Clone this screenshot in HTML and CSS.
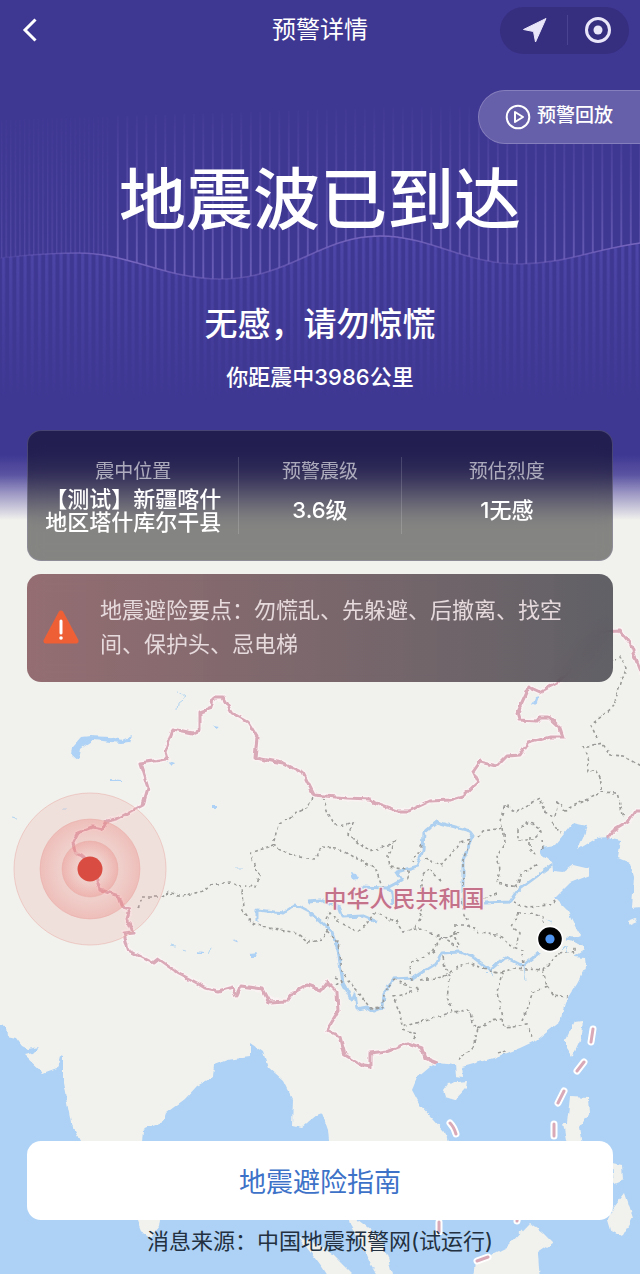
FILE: index.html
```
<!DOCTYPE html>
<html lang="zh-CN">
<head>
<meta charset="UTF-8">
<meta name="viewport" content="width=device-width, initial-scale=1">
<title>预警详情</title>
<link rel="stylesheet" href="styles.css">
</head>
<body>
<div class="page">

<!-- 地图底图 -->
<svg class="map" viewBox="0 0 640 1274" preserveAspectRatio="xMidYMax slice" role="img" aria-label="震中地图">
  <defs>
    <filter id="rough" filterUnits="userSpaceOnUse" x="-10" y="600" width="660" height="690">
      <feTurbulence type="fractalNoise" baseFrequency="0.13" numOctaves="2" seed="4"/>
      <feDisplacementMap in="SourceGraphic" scale="5" xChannelSelector="R" yChannelSelector="G"/>
    </filter>
    <radialGradient id="ring">
      <stop offset=".3" stop-color="#ef8f88" stop-opacity=".08"/>
      <stop offset="1" stop-color="#ea7b76" stop-opacity=".34"/>
    </radialGradient>
    <path id="border" d="M75 852L73 843L78 833L93 827L103 829L107 821L117 819L143 805L148 788L140 763L167 759L165 752L173 729L193 733L200 730L200 712L211 708L213 698L223 698L232 713L248 722L257 737L255 758L283 763L303 773L314 795L347 798L370 799L375 803L398 811L409 811L430 801L450 800L463 796L478 782L473 772L480 762L497 766L507 756L520 755L528 743L550 737L563 737L560 728L548 717L540 717L537 721L519 720L517 713L529 687L540 692L557 683L580 660L600 632L620 631L630 643L642 674M78 854L85 857L97 880L100 890L119 896L123 907L130 909L127 918L133 932L124 933L128 950L153 963L158 959L178 973L197 983L205 988L218 991L233 987L236 997L241 986L262 989L269 1002L287 1001L293 993L307 985L321 990L327 982L337 992L338 1012L327 1030L340 1037L345 1055L363 1066L370 1067L370 1053L387 1051L408 1043L422 1048L425 1058L437 1063M608 837L613 831L628 822L635 811L642 811"/>
    <path id="dashes" d="M593 1029L591 1042M584 1062L577 1071M564 1091L558 1103M554 1124V1136M450 1123Q454 1127 456 1134M439 1222V1232M477 1261L488 1257M518 1214L517 1221"/>
  </defs>
  <rect y="-400" width="640" height="1700" fill="#f1f1ed"/>

  <g filter="url(#rough)">
    <path class="sea" d="M-20 1025L6 1027L7 1036L16 1038L22 1046L28 1049L39 1047L33 1053L24 1055L43 1073L57 1068L60 1056L63 1057L63 1083L71 1123L80 1141L115 1190L138 1220L143 1233L150 1238L159 1227L160 1220L145 1180L142 1141L143 1130L163 1122L166 1113L185 1099L197 1086L213 1077L214 1065L227 1060L250 1057L250 1043L263 1052L268 1067L283 1080L293 1100L292 1125L302 1127L317 1115L322 1113L328 1130L329 1141L340 1185L440 1180L448 1141L445 1132L420 1105L412 1090L417 1078L430 1067L437 1063L455 1065L456 1076L463 1077L462 1067L497 1057L520 1048L537 1040L560 1022L565 1003L577 984L586 967L585 958L573 957L584 950L582 943L572 938L580 935L577 930L567 910L555 898L570 883L590 875L590 869L573 865L563 872L553 871L552 862L540 853L542 847L555 845L573 823L587 826L583 838L577 850L597 838L607 837L621 840L618 858L630 863L634 877L632 908L660 905V1300H-20Z"/>
    <path class="land" d="M345 1200L350 1225L363 1247L370 1263L383 1284H394L388 1257L380 1237L358 1220L350 1195ZM298 1236L320 1265L332 1284H362L333 1255L320 1245ZM443 1090L448 1083L467 1081L466 1088L455 1100L445 1097ZM575 1022L583 1021L580 1040L572 1057L566 1048L566 1040ZM570 1097L588 1098L589 1113L580 1127L583 1145H567L563 1123L567 1123ZM612 1163L622 1165L623 1180L614 1184ZM607 1220L612 1210L625 1193L633 1217L622 1237L610 1230ZM472 1284L475 1263L507 1247L530 1223L542 1232L553 1243L538 1253L540 1284ZM628 922L636 919L637 922L630 925Z"/>
    <path class="sea" d="M82 737L90 736L110 737L123 740L132 736L130 742L121 743L93 740L85 745L80 749L78 760L72 755L73 747ZM350 873L356 874L359 879L352 880ZM532 705L535 697L539 696L537 702ZM250 954L258 953L255 957L250 957ZM232 941L239 940L238 943ZM212 726L220 727L216 729ZM168 762L174 764L172 766ZM211 806L218 806V808H211ZM110 779L121 780V781H110ZM197 952L203 953V954H197Z"/>
    <path class="stream" d="M177 691L185 697L178 702L177 710M171 945L176 946M182 949L186 950M209 953L212 947M236 868H242M62 809H67M11 818L17 819M486 974L490 970L494 976M524 967L526 980M546 920L552 923M562 950L566 946L568 952"/>
    <path class="river" d="M257 922V910L283 913L295 905L310 913L332 932L338 950L343 983L352 1000L355 993L357 1009L367 1007L373 1011L383 1007L384 993L393 979L413 978L437 963L442 953L460 952L473 957L490 970L505 957L523 966L540 952M565 938L573 939L582 944M308 901L320 900L340 908L343 917L363 916L377 922M360 887L387 888L402 880L397 872L417 866L423 850L424 833L437 822L470 831L473 835L463 860V905M387 888L392 892L393 905M485 903L510 902L518 890L552 865"/>
    <path class="province" d="M312 797L308 808L298 812L278 825L273 845L250 853L255 867L260 875L256 887L245 886M273 845L293 856L315 859L320 847L338 848L353 857L375 867L382 887M323 797L328 813L335 825L353 823L348 835L370 852L395 842L388 857L390 867L408 870V882M138 908L143 897L160 897L167 892L183 896L203 891L210 885L230 882L242 888L243 910L252 923L263 927L298 933L308 942L323 940L327 932L338 943L342 970L347 980L357 990L370 1008L383 1007L384 993L393 980M327 932V920L330 913L340 923L358 932L367 923L377 912L397 923L403 932L420 928L440 937L458 948M422 845L413 862M428 868L422 877V913L415 928M425 858L440 866L460 843L470 840L463 860V912L470 927L480 933L497 935L513 947L522 950L523 967M430 870L443 882M478 837L483 831L503 828L500 820L505 805L517 812L540 798L547 815L555 817L558 802L565 810L602 792L617 793L624 818M552 823L561 832M503 828L505 842L497 857L500 870L497 883L517 887M497 893L483 898M528 822L518 828V840L533 840L540 833L538 827ZM530 837V850L535 855M542 840L543 850M515 887L523 873L540 863M602 790L600 777L595 770L588 773L587 753L583 747L603 743L610 755L623 756L642 767M597 738L591 725L613 707L622 680L627 667L620 657L615 660M513 903L527 907L550 905L555 900M518 913L512 927L520 933L517 945M518 913L530 913L543 917V923M455 925H470M455 925V938L460 947M458 932L440 940L432 953M443 957L445 967L450 980L447 997L453 1012L470 1010L472 1023L478 1028L473 1047L458 1060M450 972L467 963L490 970L502 973L497 993L502 1013L505 1028L527 1025L532 1037M478 1028L492 1020L502 1018M502 973L513 968L543 970L547 987L533 992L522 1020M547 987L553 995L568 997M543 970L558 953L567 952L575 953V947M393 980L420 990L393 997L400 1013L402 1027L433 1018L453 1012M402 1030L417 1035L410 1043M412 980L410 963L437 950M420 980L443 977L450 972M335 978L342 981L336 985M497 1053L505 1051V1055"/>
    <use href="#border" class="halo"/>
    <use href="#border" class="nation"/>
  </g>
  <use href="#dashes" class="dash-halo"/>
  <use href="#dashes" class="nation"/>

  <text class="country" x="404" y="907" text-anchor="middle">中华人民共和国</text>

  <g stroke="#e7a9a4" stroke-opacity=".5">
    <circle cx="90" cy="869" r="76" fill="#ef9791" fill-opacity=".18"/>
    <circle cx="90" cy="869" r="50" fill="url(#ring)"/>
    <circle cx="90" cy="869" r="28" fill="url(#ring)"/>
  </g>
  <circle cx="90" cy="869" r="12.5" fill="#d94c42"/>

  <circle cx="550" cy="939" r="13.5" fill="#fff"/>
  <circle cx="550" cy="939" r="11.8" fill="#000"/>
  <circle cx="550" cy="939" r="4.6" fill="#4f94ee"/>
</svg>

<div class="shade">
  <svg class="wave" viewBox="0 0 640 300" preserveAspectRatio="none" aria-hidden="true">
    <defs>
      <pattern id="bars" width="9.5" height="300" patternUnits="userSpaceOnUse"><rect x="3" width="1.6" height="300" fill="#8b7cd4"/></pattern>
      <pattern id="fineBars" width="4.6" height="300" patternUnits="userSpaceOnUse"><rect x="1" width="1.2" height="300" fill="#6358b4"/></pattern>
      <pattern id="softBars" width="7.2" height="300" patternUnits="userSpaceOnUse"><rect x="2" width="3" height="300" fill="#5d54bd"/></pattern>
      <linearGradient id="up" x2="0" y2="1"><stop offset="0" stop-color="#fff" stop-opacity="0"/><stop offset="1" stop-color="#fff" stop-opacity=".65"/></linearGradient>
      <linearGradient id="down" x2="0" y2="1"><stop offset="0" stop-color="#fff" stop-opacity=".55"/><stop offset="1" stop-color="#fff" stop-opacity="0"/></linearGradient>
      <linearGradient id="lineFade"><stop offset="0" stop-color="#7b6cc8" stop-opacity=".1"/><stop offset=".2" stop-color="#7766bf"/><stop offset=".35" stop-color="#7766bf" stop-opacity=".4"/><stop offset=".6" stop-color="#7766bf"/><stop offset=".8" stop-color="#7766bf" stop-opacity=".3"/><stop offset="1" stop-color="#7766bf"/></linearGradient>
      <mask id="above"><path fill="url(#up)" d="M0 20L640 0V143C590 150 565 164 518 164C465 164 430 136 380 136C320 136 290 179 220 179C165 179 130 153 78 153C45 153 30 155 0 158Z"/></mask>
      <mask id="below"><path fill="url(#down)" d="M0 300V158C30 155 45 153 78 153C130 153 165 179 220 179C290 179 320 136 380 136C430 136 465 164 518 164C565 164 590 150 640 143V300Z"/></mask>
    </defs>
    <g mask="url(#above)">
      <rect x="110" width="530" height="300" fill="url(#bars)"/>
      <rect width="110" height="300" fill="url(#fineBars)"/>
    </g>
    <rect width="640" height="300" fill="url(#softBars)" mask="url(#below)"/>
    <path d="M0 158C30 155 45 153 78 153C130 153 165 179 220 179C290 179 320 136 380 136C430 136 465 164 518 164C565 164 590 150 640 143" fill="none" stroke="url(#lineFade)" stroke-width="1.5"/>
  </svg>
</div>

<header class="nav">
  <button class="back" type="button" aria-label="返回">
    <svg width="16" height="26" viewBox="0 0 16 26"><path d="M13.500 2.500L3 13L13.500 23.500" fill="none" stroke="#fff" stroke-width="3"/></svg>
  </button>
  <h1 class="nav-title">预警详情</h1>
  <div class="capsule">
    <button type="button" aria-label="定位">
      <svg width="26" height="26" viewBox="0 0 26 26"><path d="M24 1.500L13.500 25L11.500 14.500L1.500 12.500Z" fill="#e9e6fa" stroke="#e9e6fa" stroke-linejoin="round"/></svg>
    </button>
    <button type="button" aria-label="关闭">
      <svg width="28" height="28" viewBox="0 0 28 28"><circle cx="14" cy="14" r="11.500" fill="none" stroke="#e9e6fa" stroke-width="3"/><circle cx="14" cy="14" r="4.500" fill="#e9e6fa"/></svg>
    </button>
  </div>
</header>

<main class="content">
  <button class="replay" type="button">
    <svg width="26" height="26" viewBox="0 0 26 26" fill="none" stroke="#fff" stroke-width="2" stroke-linejoin="round"><circle cx="13" cy="13" r="11.300"/><path d="M10 8L18 13L10 18Z"/></svg>
    <span>预警回放</span>
  </button>

  <h2 class="status">地震波已到达</h2>
  <p class="feel">无感，请勿惊慌</p>
  <p class="distance">你距震中3986公里</p>

  <dl class="facts card">
    <div class="fact"><dt>震中位置</dt><dd>【测试】新疆喀什<br>地区塔什库尔干县</dd></div>
    <div class="fact"><dt>预警震级</dt><dd>3.6级</dd></div>
    <div class="fact"><dt>预估烈度</dt><dd>1无感</dd></div>
  </dl>

  <section class="tips card">
    <svg width="38" height="36" viewBox="0 0 38 36" aria-hidden="true"><path d="M19 4L34 32H4Z" fill="#ee5f36" stroke="#ee5f36" stroke-width="5" stroke-linejoin="round"/><path d="M19 12V24" stroke="#fff" stroke-width="3" stroke-linecap="round"/><circle cx="19" cy="29" r="1.800" fill="#fff"/></svg>
    <p>地震避险要点：勿慌乱、先躲避、后撤离、找空间、保护头、忌电梯</p>
  </section>
</main>

<footer class="bottom">
  <button class="guide" type="button">地震避险指南</button>
  <p class="source">消息来源：中国地震预警网(试运行)</p>
</footer>

</div>
</body>
</html>
```
FILE: styles.css
```
:root{
  --purple:#3f3893;
  --land:#f1f1ed;
  --sea:#aed2f5;
  --pink:#d9a9b8;
}
*{box-sizing:border-box;margin:0;padding:0;}
body{font-family:Inter,"Noto Sans CJK SC",sans-serif;background:var(--land);color:#fff;}
button{border:none;background:none;font:inherit;color:inherit;cursor:pointer;}
.page{position:relative;min-height:100vh;display:flex;flex-direction:column;overflow:hidden;}

/* 地图 */
.map{position:absolute;inset:0;width:100%;height:100%;}
.sea{fill:var(--sea);}
.land{fill:var(--land);}
.river{fill:none;stroke:#add0f0;stroke-width:3;stroke-linejoin:round;}
.stream{fill:none;stroke:#b5d6f0;stroke-width:1;}
.province{fill:none;stroke:#9a9a98;stroke-width:1.6;stroke-dasharray:3 3;}
.nation{fill:none;stroke:var(--pink);stroke-width:3;stroke-linejoin:round;stroke-linecap:round;}
.halo{fill:none;stroke:#faf3f3;stroke-width:6;stroke-linejoin:round;}
.dash-halo{fill:none;stroke:#fff;stroke-width:7;stroke-linecap:round;}
.country{font-size:23px;font-weight:500;fill:#c4718a;stroke:#f7efef;stroke-width:2px;paint-order:stroke;}

/* 顶部紫色背景 */
.shade{position:absolute;top:0;left:0;right:0;height:520px;background:linear-gradient(var(--purple) 455px,#5b54a2 475px,#9893c2 492px,rgba(241,241,237,0) 520px);}
.wave{position:absolute;top:100px;left:0;width:100%;height:300px;}

.nav,.content,.bottom{position:relative;}
.nav{height:60px;display:grid;grid-template-columns:1fr auto 1fr;align-items:center;padding:0 11px 0 22px;}
.back{justify-self:start;width:24px;height:40px;display:flex;align-items:center;}
.nav-title{font-size:24px;font-weight:400;line-height:32px;padding-right:11px;}
.capsule{justify-self:end;display:flex;width:129px;height:47px;border-radius:24px;background:#362e7f;}
.capsule button{flex:1;display:flex;align-items:center;justify-content:center;}
.capsule button:first-child{padding-left:4px;}
.capsule button + button{background:linear-gradient(#4a4392,#4a4392) left center/1px 30px no-repeat;}

.content{display:flex;flex-direction:column;align-items:center;padding:0 27px;}
.replay{align-self:flex-end;display:flex;align-items:center;gap:6px;height:54px;margin:30px -27px 0 0;padding:0 27px 0 26px;font-size:19px;font-weight:500;line-height:24px;border:1px solid #857fbd;border-right:none;border-radius:27px 0 0 27px;background:#665fa9;}
.replay span{padding-bottom:2px;}
.status{font-size:67px;font-weight:500;line-height:80px;margin-top:16px;}
.feel{font-size:33px;font-weight:500;line-height:40px;margin-top:64px;}
.distance{font-size:22px;font-weight:500;line-height:30px;margin-top:18px;}

.card{width:100%;border-radius:14px;-webkit-backdrop-filter:blur(8px);backdrop-filter:blur(8px);}
.facts{display:grid;grid-template-columns:211fr 163fr 212fr;min-height:131px;margin-top:38px;padding:26px 0;background:rgba(0,0,0,.45);border:1px solid rgba(160,155,200,.3);}
.fact{display:flex;flex-direction:column;text-align:center;}
.fact + .fact{border-left:1px solid rgba(255,255,255,.15);}
.fact dt{font-size:19px;line-height:30px;color:rgba(255,255,255,.6);}
.fact dd{flex:1;display:flex;flex-direction:column;justify-content:center;font-size:22px;font-weight:500;line-height:23px;white-space:nowrap;}
.tips{display:flex;align-items:center;gap:20px;min-height:108px;margin-top:13px;padding:18px 36px 20px 15px;background:linear-gradient(90deg,rgba(124,76,82,.8),rgba(64,64,72,.82));}
.tips svg{flex:none;}
.tips p{font-size:22px;font-weight:400;line-height:34px;color:#e6dadd;}

.bottom{margin-top:auto;padding:24px 27px 18px;text-align:center;}
.guide{width:100%;height:79px;border-radius:14px;background:#fff;color:#3d72c8;font-size:27px;}
.source{margin-top:6px;font-size:22px;line-height:30px;color:#22303f;}
```
